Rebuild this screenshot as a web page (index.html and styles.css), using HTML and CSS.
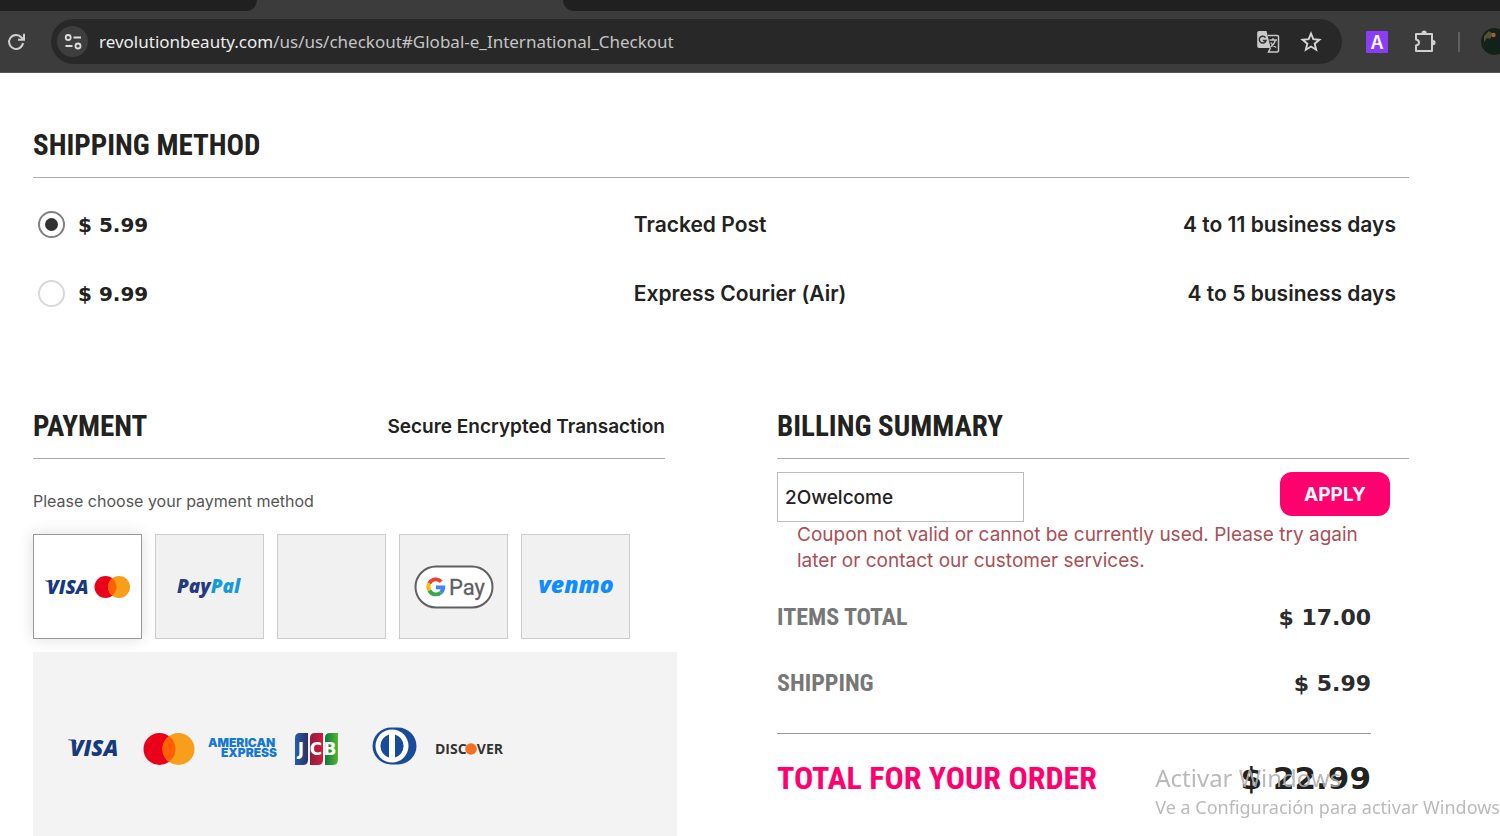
FILE: index.html
```html
<!DOCTYPE html>
<html lang="en">
<head>
<meta charset="utf-8">
<title>Checkout</title>
<link rel="stylesheet" href="styles.css">
</head>
<body>
<header class="browser">
  <div class="tabs"><div class="tab tab-before"></div><div class="tab-active"></div><div class="tab tab-after"></div></div>
  <div class="toolbar">
    <button class="icon-btn reload" aria-label="Reload"><svg width="20" height="20" viewBox="0 0 20 20" fill="none" stroke="#d0d0d0" stroke-width="2"><path d="M17 11A7 7 0 1 1 15.500 5.500L17.500 7.300"/><path d="M18 1.800v6h-6"/></svg></button>
    <div class="address">
      <button class="icon-btn site-info" aria-label="Site information"><svg width="18" height="18" viewBox="0 0 18 18" fill="none" stroke="#dedede" stroke-width="1.800"><circle cx="4.200" cy="4.500" r="2.500"/><path d="M9.500 4.500H17M1.500 13H8.500"/><circle cx="14" cy="13" r="2.500"/></svg></button>
      <div class="url"><span class="host">revolutionbeauty.com</span>/us/us/checkout#Global-e_International_Checkout</div>
      <button class="icon-btn" aria-label="Translate"><svg width="24" height="24" viewBox="0 0 24 24"><path d="M3 1h7.500l4.200 17H3a1.800 1.800 0 0 1-1.800-1.800V2.800A1.800 1.800 0 0 1 3 1z" fill="#c9c9c9"/><path d="M12 5.500h9.300a1.200 1.200 0 0 1 1.200 1.200v14a1.200 1.200 0 0 1-1.200 1.200H12.500L14.500 18" fill="none" stroke="#c9c9c9" stroke-width="1.500"/><path d="M9.500 7.600A3.400 3.400 0 1 0 10 10.500H6.800" fill="none" stroke="#333" stroke-width="1.500"/><path d="M13.500 10h7.500M17 8v2M19.500 10c-.7 3-2.500 5.300-5 7M14.800 12.500c1 2.200 2.800 3.800 5.400 5" fill="none" stroke="#c9c9c9" stroke-width="1.300"/></svg></button>
      <button class="icon-btn" aria-label="Bookmark"><svg width="22" height="22" viewBox="0 0 22 22" fill="none" stroke="#d4d4d4" stroke-width="1.900"><path d="M11 2.500l2.300 5.700 6.100.5-4.700 4 1.500 6L11 15.500l-5.200 3.200 1.500-6-4.700-4 6.100-.5z"/></svg></button>
    </div>
    <button class="icon-btn" aria-label="Extension"><svg width="22" height="22" viewBox="0 0 22 22"><rect width="22" height="22" rx="1" fill="#8b3df5"/><text class="ext-letter" x="11" y="18" text-anchor="middle">A</text></svg></button>
    <button class="icon-btn puzzle" aria-label="Extensions"><svg width="24" height="24" viewBox="0 0 24 24" fill="#cfcfcf"><path fill="none" stroke="#cfcfcf" stroke-width="2" stroke-linejoin="round" d="M3 4h16v17H3v-5.500c4-.5 4-5.500 0-6z"/><path d="M8.500 3.200a2.600 2.600 0 0 1 5.200 0zM20 10a2.600 2.600 0 0 1 0 5.200z"/></svg></button>
    <span class="divider"></span>
    <button class="icon-btn avatar" aria-label="Profile"><svg width="27" height="27" viewBox="0 0 27 27"><circle cx="13.500" cy="13.500" r="13.500" fill="#172019"/><path d="M3 8l5-5 4 3-3 5-3-1-3 4z" fill="#55522f"/><path d="M5 24l3-11 5-2 7 4v9z" fill="#10231a"/><circle cx="12.500" cy="7" r="2.200" fill="#9c6233"/></svg></button>
  </div>
</header>

<main class="checkout">
  <section class="shipping">
    <h2 class="section-head">SHIPPING METHOD</h2>
    <label class="ship-row"><span class="ship-price"><input class="radio" type="radio" name="ship" checked><span class="price">$ 5.99</span></span><span class="ship-info"><span>Tracked Post</span><span>4 to 11 business days</span></span></label>
    <label class="ship-row"><span class="ship-price"><input class="radio" type="radio" name="ship"><span class="price">$ 9.99</span></span><span class="ship-info"><span>Express Courier (Air)</span><span>4 to 5 business days</span></span></label>
  </section>

  <div class="columns">
    <section class="payment">
      <div class="section-head"><h2 class="heading">PAYMENT</h2><span class="secure">Secure Encrypted Transaction</span></div>
      <p class="choose">Please choose your payment method</p>
      <div class="methods">
        <button class="method selected" aria-label="Visa or Mastercard"><svg width="86" height="26" viewBox="0 0 86 26"><path d="M0 6.400h6l2 4.600q-3-3-8-4z" fill="#17397d"/><text class="visa" x="2" y="20" font-size="19">VISA</text><circle cx="60.500" cy="13" r="11" fill="#eb001b"/><circle cx="74" cy="13" r="11" fill="#f79e1b"/><path d="M67.250 4.300a11 11 0 0 1 0 17.400a11 11 0 0 1 0-17.400z" fill="#ff5f00"/></svg></button>
        <button class="method" aria-label="PayPal"><svg width="68" height="28" viewBox="0 0 68 28"><text class="paypal" x="1" y="20"><tspan fill="#253b80">Pay</tspan><tspan fill="#179bd7">Pal</tspan></text></svg></button>
        <button class="method" aria-label="Other payment method"></button>
        <button class="method" aria-label="Google Pay"><svg width="80" height="44" viewBox="0 0 80 44"><rect x="1.500" y="1.500" width="77" height="41" rx="20.500" fill="#fff" stroke="#5f6063" stroke-width="2"/><g fill="none" stroke-width="3.800"><path d="M27.200 16.600A7.400 7.400 0 0 0 15.300 18.500" stroke="#ea4335"/><path d="M15.300 18.500A7.400 7.400 0 0 0 15.300 25.500" stroke="#fbbc04"/><path d="M15.300 25.500A7.400 7.400 0 0 0 26.600 27.700" stroke="#34a853"/><path d="M26.600 27.700A7.400 7.400 0 0 0 29.300 22.300H22" stroke="#4285f4"/></g><text class="gpay" x="35" y="30">Pay</text></svg></button>
        <button class="method" aria-label="Venmo"><svg width="84" height="32" viewBox="0 0 84 32"><text class="venmo" x="42" y="22" text-anchor="middle">venmo</text></svg></button>
      </div>
      <div class="cards">
        <svg width="54" height="28" viewBox="0 0 54 28" role="img" aria-label="Visa"><path d="M1 7.500h7l2 5q-3-4-9-4.500z" fill="#17397d"/><text class="visa" x="3" y="24" font-size="22">VISA</text></svg>
        <svg class="mc" width="52" height="34" viewBox="0 0 52 34" role="img" aria-label="Mastercard"><circle cx="16.500" cy="17" r="16" fill="#eb001b"/><circle cx="35.500" cy="17" r="16" fill="#f79e1b"/><path d="M26 4.100a16 16 0 0 1 0 25.800a16 16 0 0 1 0-25.800z" fill="#ff5f00"/></svg>
        <svg class="amex" width="70" height="24" viewBox="0 0 70 24" role="img" aria-label="American Express"><text class="amex-text" x="0" y="10">AMERICAN</text><text class="amex-text" x="69" y="20" text-anchor="end">EXPRESS</text></svg>
        <svg class="jcb" width="46" height="34" viewBox="0 0 46 34" role="img" aria-label="JCB"><defs><linearGradient id="jb"><stop stop-color="#245cae"/><stop offset="1" stop-color="#293264"/></linearGradient><linearGradient id="jr"><stop stop-color="#8c1f3b"/><stop offset="1" stop-color="#d41a40"/></linearGradient><linearGradient id="jg"><stop stop-color="#087b3b"/><stop offset="1" stop-color="#58b632"/></linearGradient></defs><path d="M1 33V6q0-5 5-5h8v27q0 5-5 5z" fill="url(#jb)"/><path d="M16 33V6q0-5 5-5h8v27q0 5-5 5z" fill="url(#jr)"/><path d="M31 33V6q0-5 5-5h8v27q0 5-5 5z" fill="url(#jg)"/><text class="jcb-text" x="7" y="23" text-anchor="middle">J</text><text class="jcb-text" x="22" y="23" text-anchor="middle">C</text><text class="jcb-text" x="36" y="23" text-anchor="middle">B</text></svg>
        <svg class="diners" width="44" height="38" viewBox="0 0 44 38" role="img" aria-label="Diners Club"><path d="M18 .5h7a18.500 18.500 0 0 1 0 37h-7a18.500 18.500 0 0 1 0-37z" fill="#194b9b"/><circle cx="19" cy="19" r="16.500" fill="#fff"/><path d="M16 7.500v23a12 12 0 0 1 0-23zM22 7.500a12 12 0 0 1 0 23z" fill="#194b9b"/></svg>
        <svg class="discover" width="70" height="24" viewBox="0 0 70 24" role="img" aria-label="Discover"><text class="discover-text" x="0" y="17">DISC</text><circle cx="36" cy="12" r="5.800" fill="#f36f21"/><text class="discover-text" x="68" y="17" text-anchor="end">VER</text></svg>
      </div>
    </section>

    <section class="billing">
      <h2 class="section-head">BILLING SUMMARY</h2>
      <div class="coupon"><input class="coupon-input" type="text" value="2Owelcome" aria-label="Coupon code"><button class="apply">APPLY</button></div>
      <p class="error">Coupon not valid or cannot be currently used. Please try again later or contact our customer services.</p>
      <div class="line"><span class="line-label">ITEMS TOTAL</span><span class="amount">$ 17.00</span></div>
      <div class="line"><span class="line-label">SHIPPING</span><span class="amount">$ 5.99</span></div>
      <div class="total"><span>TOTAL FOR YOUR ORDER</span><span class="total-amount">$ 22.99</span></div>
    </section>
  </div>
</main>
<aside class="watermark"><div class="wm-title">Activar Windows</div><div class="wm-text">Ve a Configuración para activar Windows</div></aside>
</body>
</html>
```
FILE: styles.css
```css
* { box-sizing: border-box; }
body {
  margin: 0; min-height: 100vh; display: flex; flex-direction: column;
  overflow: hidden; background: #fff; color: #222220;
  font-family: Inter, "Liberation Sans", sans-serif;
}
button { font: inherit; cursor: pointer; }
h2, p { margin: 0; }
svg { display: block; flex: none; overflow: visible; }

.browser { background: #3c3c3c; border-bottom: 1px solid #555; }
.tabs { display: flex; height: 11px; background: #3c3c3c; }
.tab { background: #202020; }
.tab-before { width: 257px; border-bottom-right-radius: 11px; }
.tab-active { width: 306px; }
.tab-after { flex: 1; border-bottom-left-radius: 11px; }
.toolbar { display: flex; align-items: center; height: 61px; padding-left: 6px; overflow: hidden; }
.icon-btn { display: flex; align-items: center; justify-content: center; flex: none; padding: 0; border: 0; background: none; }
.reload { margin-right: 25px; }
.address {
  flex: 1; display: flex; align-items: center; gap: 20px; height: 45px;
  margin-right: 24px; padding: 0 20px 0 6px; border-radius: 23px; background: #282828;
}
.site-info { width: 31px; height: 31px; border-radius: 50%; background: #3e3e3e; }
.url { flex: 1; margin-left: -9px; font: 17px "Noto Sans", "Open Sans", sans-serif; color: #c4c4c4; white-space: nowrap; }
.host { color: #ececec; }
.ext-letter { font: 600 18px Inter, sans-serif; fill: #fff; }
.puzzle { margin-left: 25px; }
.divider { width: 2px; height: 20px; margin: 0 21px; background: #606060; }
.avatar { margin-right: -8px; }

.checkout { flex: 1; display: flex; flex-direction: column; padding: 40px 91px 0 33px; }
.section-head {
  display: flex; align-items: center; justify-content: space-between;
  height: 65px; border-bottom: 1px solid #aaa;
}
h2, .line-label, .total { font-family: "Roboto Condensed", Roboto, sans-serif; font-weight: 700; }
h2 { font-size: 29px; line-height: 32px; }
.shipping { padding-bottom: 66px; }
.shipping .section-head { margin-bottom: 12px; }
.ship-row {
  display: grid; grid-template-columns: 43fr 55fr; align-items: center;
  height: 69px; padding: 0 13px 0 5px; font-size: 21px; font-weight: 600;
}
.ship-price { display: flex; align-items: center; gap: 13px; }
.ship-info { display: flex; justify-content: space-between; }
.price, .amount, .total-amount { font-family: "DejaVu Sans", sans-serif; font-weight: 700; }
.price { font-size: 20px; }
.radio {
  appearance: none; display: grid; place-content: center; width: 27px; height: 27px;
  margin: 0; border: 2px solid #d8d8d8; border-radius: 50%;
}
.radio:checked { border-color: #808080; }
.radio:checked::before { content: ""; width: 13px; height: 13px; border-radius: 50%; background: #333; }

.columns { flex: 1; display: grid; grid-template-columns: 1fr 1fr; gap: 112px; }
.payment { display: flex; flex-direction: column; }
.secure { font-size: 19px; font-weight: 600; }
.choose { padding: 30px 0 21px; font-size: 16px; line-height: 24px; color: #555; }
.methods { display: flex; gap: 13px; }
.method {
  display: flex; align-items: center; justify-content: center; width: 109px; height: 105px;
  padding: 0; border: 1px solid #ccc; background: #f1f1f1;
}
.method.selected { border-color: #999; background: #fff; box-shadow: 0 0 14px #ddd; }
.visa { font-family: "Open Sans", sans-serif; font-weight: 800; font-style: italic; fill: #17397d; }
.paypal { font: italic 800 19px "Open Sans", sans-serif; }
.gpay { font: 400 22px Roboto, sans-serif; fill: #5f6063; stroke: #5f6063; stroke-width: 0.3px; }
.venmo { font: italic 800 23px "Open Sans", sans-serif; fill: #118cff; }
.cards {
  flex: 1; display: flex; align-items: flex-start; gap: 13px; margin: 13px -12px 0 0;
  padding: 76px 0 70px 34px; background: #f3f3f3;
}
.cards svg { margin-top: 4px; }
.cards .mc { margin-left: 9px; }
.cards .amex { margin-top: 9px; }
.cards .jcb { margin-left: 3px; }
.cards .diners { margin: -1px 0 0 20px; }
.cards .discover { margin: 9px 0 0 5px; }
.amex-text { font: 900 12px Inter, sans-serif; fill: #1678cf; }
.jcb-text { font: 700 17px "DejaVu Sans", sans-serif; fill: #fff; }
.discover-text { font: 700 14px "Open Sans", sans-serif; fill: #333; }

.coupon { display: flex; align-items: flex-start; justify-content: space-between; padding: 13px 19px 0 0; }
.coupon-input {
  width: 247px; height: 50px; padding: 0 7px; border: 1px solid #bbb;
  font: 500 19px Inter, sans-serif; color: #222;
}
.apply {
  width: 110px; height: 44px; padding: 0; border: 0; border-radius: 12px;
  background: #ff006e; color: #fff; font-size: 19px; font-weight: 700;
}
.error { padding: 0 40px 10px 20px; font-size: 19px; line-height: 26px; color: #a94f55; }
.line { display: flex; align-items: center; justify-content: space-between; height: 66px; margin-right: 38px; }
.line-label { font-size: 24px; color: #777; }
.amount { font-size: 22px; color: #2c2c2c; }
.total {
  display: flex; align-items: center; justify-content: space-between; height: 88px;
  margin: 17px 38px 0 0; border-top: 1px solid #999; color: #ff006e; font-size: 32px;
}
.total-amount { font-size: 31px; color: #222220; }
.watermark {
  position: fixed; right: 0; bottom: 16px; font-family: "Noto Sans", "Open Sans", sans-serif;
  color: rgba(174, 174, 174, 0.85); white-space: nowrap;
}
.wm-title { font-size: 24px; line-height: 32px; }
.wm-text { font-size: 18px; line-height: 26px; }
```
